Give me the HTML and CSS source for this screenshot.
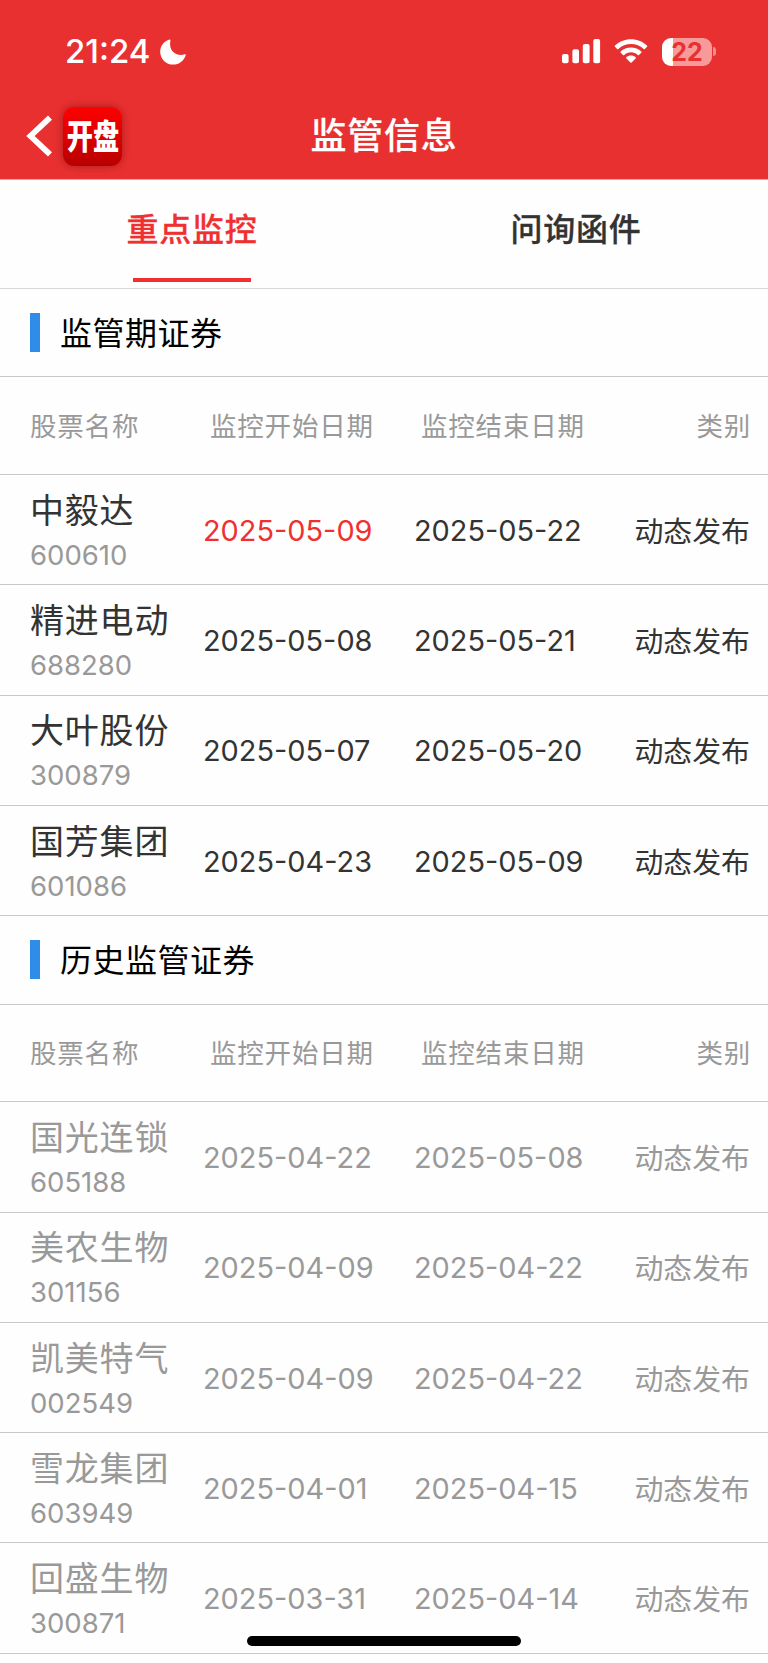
FILE: index.html
```html
<!DOCTYPE html>
<html lang="zh-CN">
<head>
    <meta charset="utf-8">
    <title>监管信息</title>
    <link rel="stylesheet" href="styles.css">
</head>
<body>

<header class="header">
    <div class="status-bar">
        <span class="time">21:24</span>
        <svg class="moon" width="26" height="26" viewBox="0 0 26 26">
            <path fill="#fff" d="M9.6 0.6C4 2.2 0.2 7 0.2 12.7 0.2 19.9 6 25.6 13.2 25.6c5.700 0 10.800-3.700 12.500-9.400 0.200-0.700-0.300-1.100-0.900-0.900C17 17.900 8.200 12.400 10.400 1.400c0.100-0.600-0.200-1-0.800-0.800z"/>
        </svg>
        <svg class="signal" width="39" height="25" viewBox="0 0 39 25">
            <g fill="#fff">
                <rect x="0" y="15" width="6.600" height="9.300" rx="2"/>
                <rect x="10.400" y="10.300" width="6.600" height="14" rx="2"/>
                <rect x="20.800" y="5" width="6.800" height="19.300" rx="2"/>
                <rect x="31.300" y="0" width="6.800" height="24.300" rx="2"/>
            </g>
        </svg>
        <svg class="wifi" width="34" height="25" viewBox="0 0 34 25">
            <g fill="#fff">
                <path d="M17 0.200c6.200 0 12 2.400 16 6.300 0.400 0.400 0.400 0.900 0 1.300L30.900 10c-0.400 0.400-0.900 0.400-1.300 0C26.300 6.900 21.800 5.100 17 5.100S7.700 6.900 4.400 10c-0.400 0.400-0.900 0.400-1.300 0L1 7.800c-0.400-0.400-0.400-0.900 0-1.300C5 2.600 10.800 0.200 17 0.200z"/>
                <path d="M17 8.400c4 0 7.600 1.500 10.300 4 0.400 0.400 0.400 0.900 0 1.300l-2.300 2.200c-0.400 0.400-0.900 0.400-1.300 0-1.800-1.600-4.200-2.600-6.700-2.600s-4.900 1-6.700 2.600c-0.400 0.400-0.900 0.400-1.300 0l-2.300-2.200c-0.400-0.400-0.400-0.900 0-1.300 2.700-2.500 6.300-4 10.300-4z"/>
                <path d="M17 16.500c1.800 0 3.400 0.600 4.600 1.600 0.400 0.400 0.400 0.900 0 1.300l-4 4.100c-0.400 0.400-0.800 0.400-1.200 0l-4-4.100c-0.400-0.400-0.400-0.900 0-1.300 1.200-1 2.800-1.600 4.600-1.600z"/>
            </g>
        </svg>
        <div class="battery"><span>22</span></div>
        <div class="battery-tip"></div>
    </div>

    <div class="nav-bar">
        <svg class="back" width="26" height="42" viewBox="0 0 26 42">
            <path d="M24 2.600L4.500 21l19.500 18.400" fill="none" stroke="#fff" stroke-width="5.800"/>
        </svg>
        <div class="logo"><span>开盘</span></div>
        <h1>监管信息</h1>
    </div>
</header>

<nav class="tabs">
    <a class="tab active">重点监控</a>
    <a class="tab">问询函件</a>
</nav>

<!-- 监管期证券 -->
<section>
    <h2><i></i><span>监管期证券</span></h2>
    <div class="row head">
        <span>股票名称</span><span class="date">监控开始日期</span><span class="date">监控结束日期</span><span class="type">类别</span>
    </div>
    <div class="row">
        <div class="stock"><b>中毅达</b><small>600610</small></div>
        <span class="date today">2025-05-09</span><span class="date">2025-05-22</span><span class="type">动态发布</span>
    </div>
    <div class="row">
        <div class="stock"><b>精进电动</b><small>688280</small></div>
        <span class="date">2025-05-08</span><span class="date">2025-05-21</span><span class="type">动态发布</span>
    </div>
    <div class="row">
        <div class="stock"><b>大叶股份</b><small>300879</small></div>
        <span class="date">2025-05-07</span><span class="date">2025-05-20</span><span class="type">动态发布</span>
    </div>
    <div class="row">
        <div class="stock"><b>国芳集团</b><small>601086</small></div>
        <span class="date">2025-04-23</span><span class="date">2025-05-09</span><span class="type">动态发布</span>
    </div>
</section>

<!-- 历史监管证券 -->
<section class="history">
    <h2><i></i><span>历史监管证券</span></h2>
    <div class="row head">
        <span>股票名称</span><span class="date">监控开始日期</span><span class="date">监控结束日期</span><span class="type">类别</span>
    </div>
    <div class="row">
        <div class="stock"><b>国光连锁</b><small>605188</small></div>
        <span class="date">2025-04-22</span><span class="date">2025-05-08</span><span class="type">动态发布</span>
    </div>
    <div class="row">
        <div class="stock"><b>美农生物</b><small>301156</small></div>
        <span class="date">2025-04-09</span><span class="date">2025-04-22</span><span class="type">动态发布</span>
    </div>
    <div class="row">
        <div class="stock"><b>凯美特气</b><small>002549</small></div>
        <span class="date">2025-04-09</span><span class="date">2025-04-22</span><span class="type">动态发布</span>
    </div>
    <div class="row">
        <div class="stock"><b>雪龙集团</b><small>603949</small></div>
        <span class="date">2025-04-01</span><span class="date">2025-04-15</span><span class="type">动态发布</span>
    </div>
    <div class="row">
        <div class="stock"><b>回盛生物</b><small>300871</small></div>
        <span class="date">2025-03-31</span><span class="date">2025-04-14</span><span class="type">动态发布</span>
    </div>
</section>

<div class="home-indicator"></div>

</body>
</html>
```
FILE: styles.css
```css
* {
    box-sizing: border-box;
}
body {
    margin: 0;
    height: 1663px;
    overflow: hidden;
    font-family: Inter, "Noto Sans CJK SC", sans-serif;
    background-color: #fefefe;
    color: #333;
}
.header {
    height: 180px;
    background-color: #e93030;
    border-bottom: 1px solid #f5a3a3;
    color: #fff;
}
.status-bar {
    display: flex;
    height: 103px;
    padding: 0 52px 0 65px;
    align-items: center;
}
.time {
    width: 95px;
    padding-bottom: 1px;
    font-size: 33px;
    font-weight: 550;
    white-space: nowrap;
}
.signal {
    margin-left: auto;
}
.wifi {
    margin: 0 14px 0 13px;
}
.battery {
    width: 50px;
    height: 28px;
    border-radius: 9px;
    background: linear-gradient(to right, #fff 11.5px, #f69a9a 11.5px);
    color: #e93030;
    font-size: 25px;
    font-weight: 700;
    line-height: 28px;
    text-align: center;
}
.battery-tip {
    width: 3px;
    height: 9px;
    margin-left: 1px;
    border-radius: 0 5px 5px 0;
    background-color: #f28a8a;
}
.nav-bar {
    display: grid;
    grid-template-columns: 37px 59px 1fr 122px;
    height: 66px;
    padding-left: 26px;
    align-items: center;
}
.logo {
    display: flex;
    width: 59px;
    height: 59px;
    align-items: center;
    justify-content: center;
    border-radius: 11px;
    background: linear-gradient(#ff0000, #b80000);
    box-shadow: 0 0 9px rgba(90,0,0,0.45);
}
.logo span {
    flex: none;
    font-size: 34px;
    font-weight: 900;
    line-height: 59px;
    white-space: nowrap;
    transform: scaleX(0.77);
}
h1 {
    margin: 0;
    padding-bottom: 7px;
    font-size: 36px;
    font-weight: 500;
    letter-spacing: 0.8px;
    text-align: center;
    -webkit-text-stroke: 0.2px;
}
.tabs {
    display: flex;
    height: 109px;
    border-bottom: 1px solid #d8d8d8;
}
.tab {
    flex: 1;
    height: 102px;
    font-size: 32px;
    font-weight: 500;
    letter-spacing: 0.8px;
    line-height: 100px;
    text-align: center;
    -webkit-text-stroke: 0.3px;
}
.active {
    color: #f03030;
}
.active::after {
    content: "";
    display: block;
    width: 118px;
    height: 4px;
    margin: -2px auto 0;
    background-color: #f03030;
}
h2 {
    display: flex;
    height: 88.4px;
    margin: 0;
    padding-left: 30px;
    align-items: center;
    border-bottom: 1px solid #c8c8c8;
    color: #000;
    font-size: 32px;
    font-weight: 400;
    letter-spacing: 0.5px;
}
h2 i {
    width: 10px;
    height: 39px;
    margin-right: 20px;
    background-color: #2f8ce9;
}
h2 span {
    padding-bottom: 3px;
}
.row {
    display: grid;
    grid-template-columns: 173px 211px 1fr auto;
    height: 110.25px;
    padding: 0 18px 0 30px;
    align-items: center;
    border-bottom: 1px solid #c8c8c8;
    font-size: 28.9px;
    white-space: nowrap;
}
.row.head {
    height: 97.8px;
    padding: 0 17px 3px 30px;
    color: #999;
    font-size: 26.5px;
    letter-spacing: 0.8px;
}
.head .date {
    padding: 0 0 0 7px;
}
.date {
    padding-top: 1px;
}
.type {
    padding-bottom: 2px;
}
.head .type {
    padding: 0;
}
.stock {
    padding-top: 4px;
}
.stock b {
    display: block;
    font-size: 34px;
    font-weight: 400;
    letter-spacing: 0.8px;
    line-height: 46px;
}
.stock small {
    display: block;
    color: #999;
    font-size: 27.5px;
    line-height: 42px;
}
.today {
    color: #f03030;
}
.history .row {
    color: #999;
}
.home-indicator {
    position: absolute;
    left: 247px;
    top: 1636px;
    width: 274px;
    height: 10px;
    border-radius: 5px;
    background-color: #000;
}
```
